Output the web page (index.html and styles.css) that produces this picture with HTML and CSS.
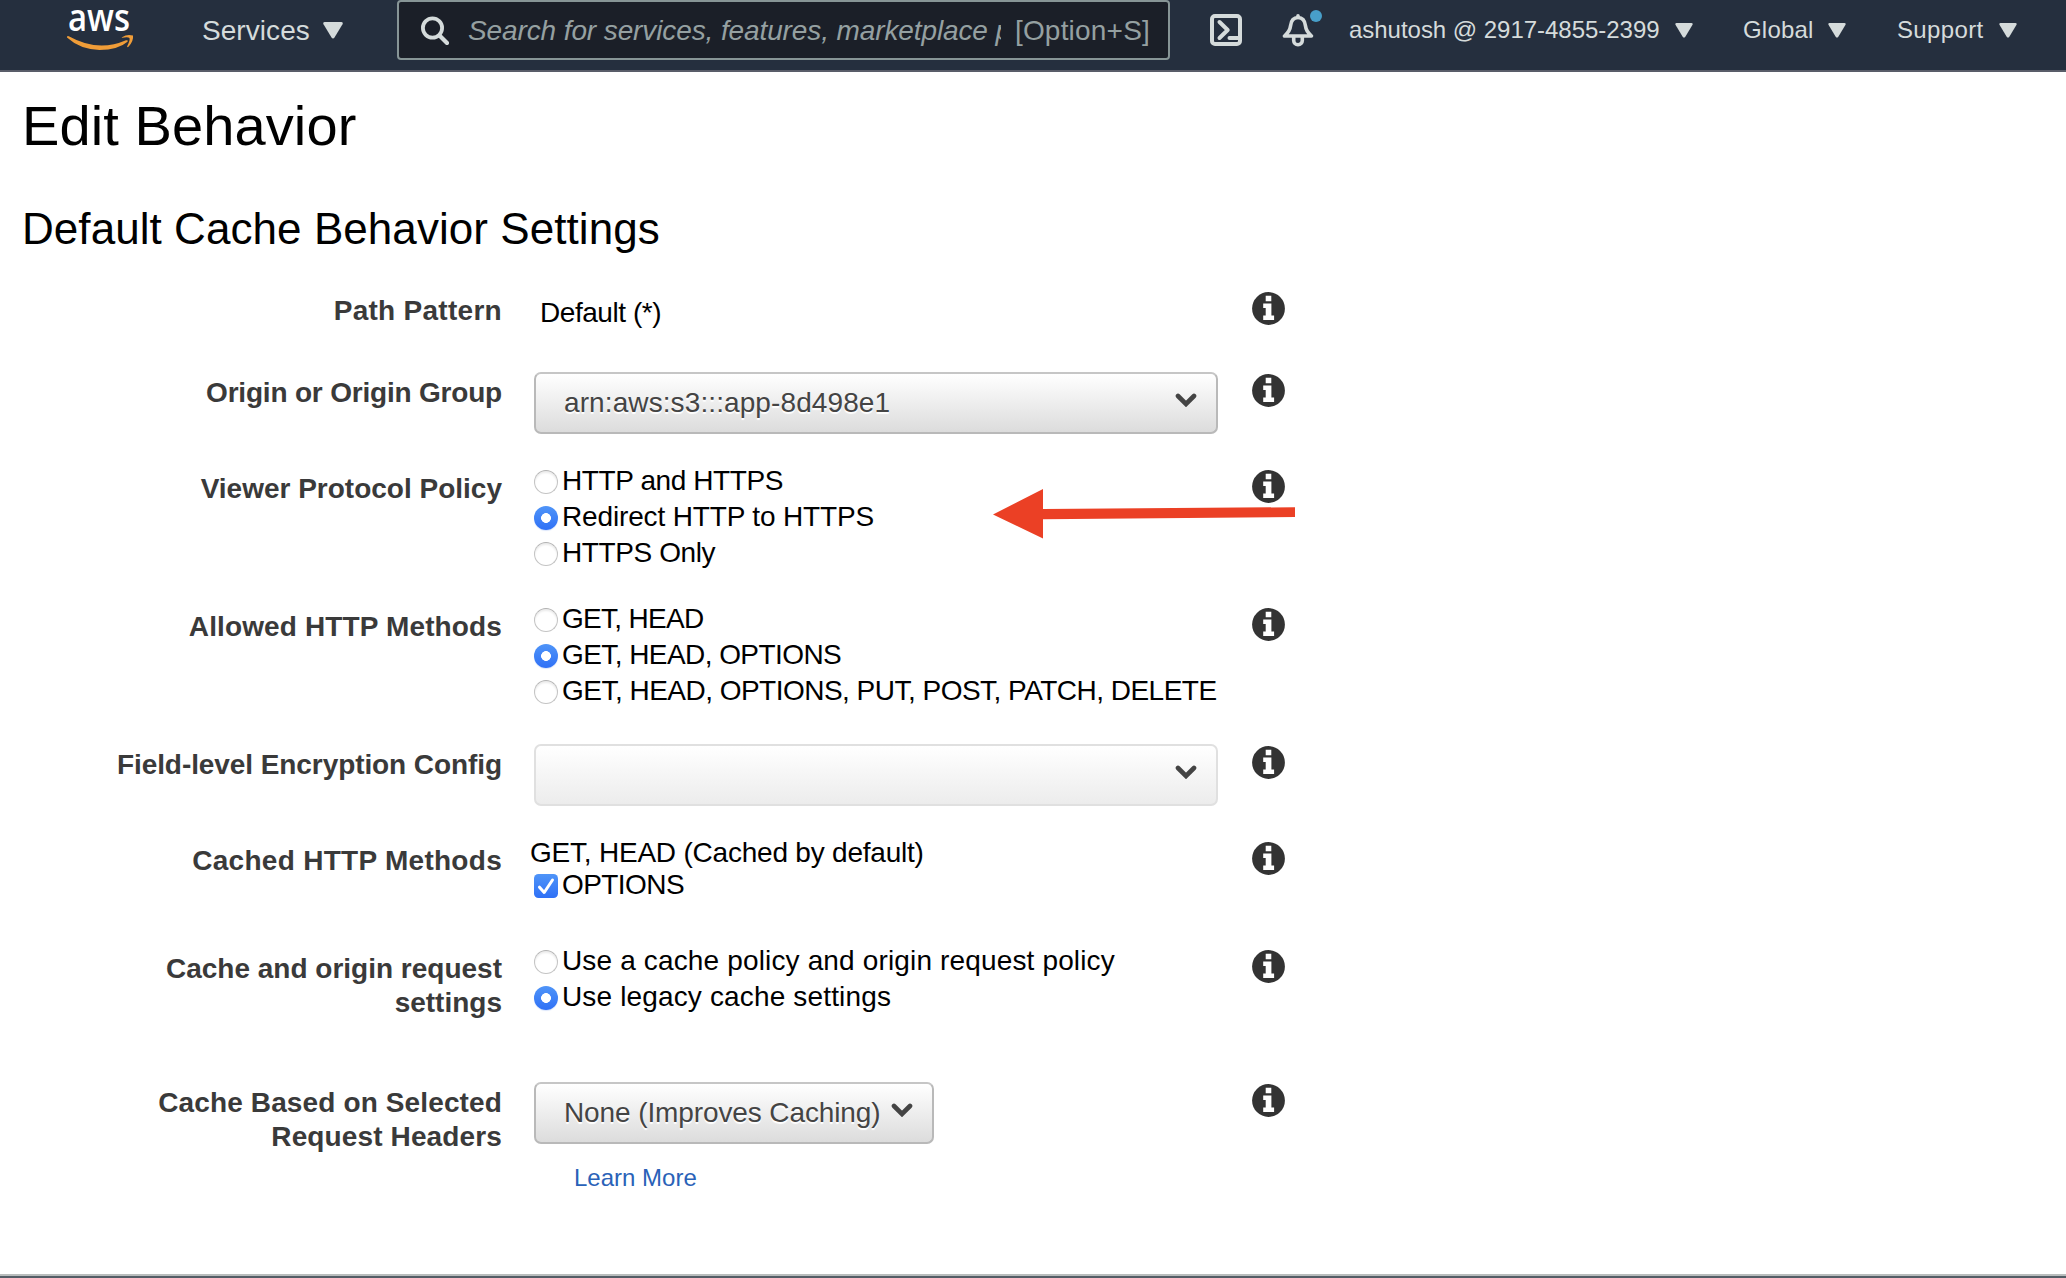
FILE: index.html
```html
<!DOCTYPE html>
<html lang="en">
<head>
<meta charset="utf-8">
<title>Edit Behavior</title>
<link rel="stylesheet" href="styles.css">
</head>
<body>
<svg class="sprite" aria-hidden="true">
  <symbol id="caret" viewBox="0 0 20 17"><path d="M1.500 0H18.500Q20.500 .3 19.500 2.200L11.500 15.500Q10 17.500 8.500 15.500L.5 2.200Q-.5 .3 1.500 0Z" fill="#d5dbdb"/></symbol>
  <symbol id="info" viewBox="0 0 33 33"><circle cx="16.500" cy="16.500" r="16.400" fill="#333"/><path d="M13.700 3.800h5.600v5.400h-5.600zM11.200 11.600h8.200v12h2.700v4.500H11.200v-4.500h2.500v-7.500h-2.500z" fill="#fff"/></symbol>
  <symbol id="chevron" viewBox="0 0 22 14"><path d="M3 3l8 8 8-8" fill="none" stroke="#444" stroke-width="4.600" stroke-linecap="round"/></symbol>
</svg>

<header class="topbar">
  <a class="logo" aria-label="aws">
    <svg width="68" height="52" viewBox="0 0 68 52">
      <text x="2" y="30.500" class="logo-word" textLength="62" lengthAdjust="spacingAndGlyphs">aws</text>
      <path d="M1 36.500q1-1 2.300 0Q32 52.500 60 40.300q2.700-.7 1.500 1.500Q52 50 33.500 50 14 49.500 1 37.600z" fill="#f09d38"/>
      <path d="M56 37.200q5.500-3.600 11-1.600.8 5.500-4.500 11.200-1.700 1.200-1.300-.5 3.300-6.800 2.200-8.300-1.400-1.200-6.900-.2-1.400.2-.5-.6z" fill="#f09d38"/>
    </svg>
  </a>
  <div class="nav-item services"><span>Services</span><svg class="caret caret-lg"><use href="#caret"/></svg></div>
  <div class="search">
    <svg class="search-icon" viewBox="0 0 28 29"><circle cx="11.500" cy="12" r="9.600" fill="none" stroke="#d5dbdb" stroke-width="3.800"/><path d="M18.500 19.500L26 27" stroke="#d5dbdb" stroke-width="4.200" stroke-linecap="round"/></svg>
    <span class="search-hint">Search for services, features, marketplace p</span>
    <span class="search-key">[Option+S]</span>
  </div>
  <svg class="shell-icon" width="32" height="32" viewBox="0 0 32 32" fill="none" stroke="#d5dbdb" stroke-width="4"><rect x="2" y="2" width="28" height="28" rx="3"/><path d="M9.500 8l8.200 8-8.200 8" stroke-linecap="round" stroke-linejoin="round"/><path d="M19.500 24H29" stroke-linecap="round"/></svg>
  <svg class="bell-icon" width="42" height="42" viewBox="0 0 42 42" fill="none" stroke="#d5dbdb" stroke-width="3.600"><path d="M16 11.500v-1.700" stroke-linecap="round"/><path d="M16 11.500c-5 0-7 4-7.500 8.500-.4 4-2.500 7-6 10h27c-3.500-3-5.600-6-6-10-.5-4.500-2.500-8.500-7.500-8.500z" stroke-linejoin="round"/><path d="M11.700 31v3.500a4.300 4.300 0 0 0 8.600 0V31"/><circle cx="34" cy="10" r="6" fill="#489fc9" stroke="none"/></svg>
  <div class="nav-item small account"><span>ashutosh @ 2917-4855-2399</span><svg class="caret"><use href="#caret"/></svg></div>
  <div class="nav-item small region"><span>Global</span><svg class="caret"><use href="#caret"/></svg></div>
  <div class="nav-item small support"><span>Support</span><svg class="caret"><use href="#caret"/></svg></div>
</header>

<main class="page">
  <h1>Edit Behavior</h1>
  <h2>Default Cache Behavior Settings</h2>

  <div class="settings">
    <div class="row row-path">
      <div class="label label-loose">Path Pattern</div>
      <div class="field"><span class="value">Default (*)</span></div>
      <svg class="info"><use href="#info"/></svg>
    </div>
    <div class="row row-origin">
      <div class="label label-tight">Origin or Origin Group</div>
      <div class="field"><div class="select"><span>arn:aws:s3:::app-8d498e1</span><svg class="chevron"><use href="#chevron"/></svg></div></div>
      <svg class="info"><use href="#info"/></svg>
    </div>
    <div class="row row-viewer">
      <div class="label">Viewer Protocol Policy</div>
      <div class="field options">
        <label class="option protocol"><i class="radio"></i>HTTP and HTTPS</label>
        <label class="option redirect"><i class="radio checked"></i>Redirect HTTP to HTTPS</label>
        <label class="option protocol"><i class="radio"></i>HTTPS Only</label>
      </div>
      <svg class="info"><use href="#info"/></svg>
      <svg class="arrow" width="303" height="50" viewBox="0 0 303 50"><path d="M0 25.500L50 0V20L302 18.200V28L50 30.200V49.500Z" fill="#eb4025"/></svg>
    </div>
    <div class="row row-methods">
      <div class="label label-mid">Allowed HTTP Methods</div>
      <div class="field options">
        <label class="option verbs-short"><i class="radio"></i>GET, HEAD</label>
        <label class="option verbs"><i class="radio checked"></i>GET, HEAD, OPTIONS</label>
        <label class="option verbs-all"><i class="radio"></i>GET, HEAD, OPTIONS, PUT, POST, PATCH, DELETE</label>
      </div>
      <svg class="info"><use href="#info"/></svg>
    </div>
    <div class="row row-encryption">
      <div class="label label-snug">Field-level Encryption Config</div>
      <div class="field"><div class="select disabled"><span></span><svg class="chevron"><use href="#chevron"/></svg></div></div>
      <svg class="info"><use href="#info"/></svg>
    </div>
    <div class="row row-cached">
      <div class="label label-loose">Cached HTTP Methods</div>
      <div class="field options">
        <div class="cached-note">GET, HEAD (Cached by default)</div>
        <label class="option option-check verbs"><svg class="checkbox" width="24" height="24" viewBox="0 0 24 24"><defs><linearGradient id="blue" x1="0" y1="0" x2="0" y2="1"><stop offset="0" stop-color="#4f94f8"/><stop offset="1" stop-color="#2f70f6"/></linearGradient></defs><rect width="24" height="24" rx="4.500" fill="url(#blue)"/><path d="M5.500 13.200l4.700 5.300L18.500 6" fill="none" stroke="#fff" stroke-width="3" stroke-linecap="round" stroke-linejoin="round"/></svg>OPTIONS</label>
      </div>
      <svg class="info"><use href="#info"/></svg>
    </div>
    <div class="row row-cache">
      <div class="label">Cache and origin request<br>settings</div>
      <div class="field options">
        <label class="option prose"><i class="radio"></i>Use a cache policy and origin request policy</label>
        <label class="option prose"><i class="radio checked"></i>Use legacy cache settings</label>
      </div>
      <svg class="info"><use href="#info"/></svg>
    </div>
    <div class="row row-headers">
      <div class="label label-mid">Cache Based on Selected<br>Request Headers</div>
      <div class="field"><div class="select select-auto"><span>None (Improves Caching)</span><svg class="chevron"><use href="#chevron"/></svg></div><a class="learn">Learn More</a></div>
      <svg class="info"><use href="#info"/></svg>
    </div>
  </div>
</main>
<footer class="bottom-edge"></footer>
</body>
</html>
```
FILE: styles.css
```css
* { box-sizing: border-box; }

body {
  margin: 0;
  height: 1278px;
  display: flex;
  flex-direction: column;
  overflow: hidden;
  background: #fff;
  color: #000;
  font-family: "Liberation Sans", Arial, sans-serif;
  font-size: 28px;
}

svg { display: block; flex: none; }
.sprite { position: absolute; width: 0; height: 0; }

/* Top navigation */
.topbar {
  flex: none;
  height: 72px;
  display: flex;
  align-items: flex-start;
  padding-left: 66px;
  background: #252f3e;
  border-bottom: 2px solid #595d69;
  color: #d5dbdb;
  white-space: nowrap;
}
.logo { width: 136px; flex: none; }
.logo svg { overflow: visible; }
.logo-word { font-family: "Open Sans", sans-serif; font-size: 37px; font-weight: 600; fill: #fff; }
.nav-item { display: flex; flex: none; justify-content: space-between; align-items: flex-start; line-height: 32px; }
.services { width: 141px; padding-top: 15px; letter-spacing: .06px; }
.caret { width: 18px; height: 15px; }
.caret-lg { width: 20px; height: 17px; margin-top: 7px; }

.search {
  flex: none;
  width: 773px;
  height: 60px;
  margin-left: 54px;
  padding: 13px 18px 0 22px;
  display: flex;
  line-height: 32px;
  background: #1b1f28;
  border: 2px solid #879596;
  border-radius: 4px;
  color: #95a0a1;
}
.search-icon { width: 28px; height: 29px; margin-top: 1px; }
.search-hint { width: 535px; margin-left: 19px; overflow: hidden; font-style: italic; letter-spacing: -.11px; }
.search-key { margin-left: 14px; letter-spacing: .2px; }

.shell-icon { margin: 14px 0 0 40px; }
.bell-icon { margin: 6px 0 0 40px; }
.small { font-size: 24px; line-height: 28px; padding-top: 16px; }
.small .caret { margin-top: 7px; }
.account { width: 344px; margin-left: 25px; letter-spacing: -.03px; }
.region { width: 103px; margin-left: 50px; letter-spacing: .2px; }
.support { width: 120px; margin-left: 51px; letter-spacing: .35px; }

/* Page */
.page { flex: 1; min-height: 0; padding-left: 22px; }
h1, h2 { margin: 0; font-weight: 400; }
h1 { margin-top: 22px; font-size: 56px; line-height: 64px; letter-spacing: .1px; }
h2 { margin-top: 46px; font-size: 44px; line-height: 50px; letter-spacing: .06px; }

.settings { margin-top: 36px; }
.row {
  position: relative;
  display: grid;
  grid-template-columns: 480px 750px 33px;
  align-items: start;
}
.row-path { height: 82px; }
.row-origin { height: 96px; }
.row-viewer { height: 138px; }
.row-methods { height: 138px; }
.row-encryption { height: 96px; }
.row-cached { height: 108px; }
.row-cache { height: 134px; }

.label { padding-top: 4px; line-height: 34px; font-weight: 700; color: #3a3a3a; text-align: right; }
.label-loose { letter-spacing: .28px; }
.label-mid { letter-spacing: .13px; }
.label-snug { letter-spacing: -.08px; }
.label-tight { letter-spacing: -.195px; }
.info { width: 33px; height: 33px; margin-top: 2px; }

.field { padding-left: 32px; white-space: nowrap; }
.value { display: block; padding: 6px 0 0 6px; line-height: 34px; letter-spacing: -.45px; }

.select {
  width: 684px;
  height: 62px;
  display: flex;
  justify-content: space-between;
  padding: 11px 19px 0 28px;
  border: 2px solid #b9b9b9;
  border-top-color: #c6c6c6;
  border-radius: 7px;
  background: linear-gradient(#fff, #dcdcdc);
  color: #444;
  line-height: 36px;
  letter-spacing: .1px;
  text-shadow: 0 2px 1px #fff;
}
.select .chevron { width: 22px; height: 14px; margin-top: 8px; }
.select.disabled { border-color: #e0e0e0; background: linear-gradient(#fff, #ececec); }
.select-auto { width: 400px; letter-spacing: -.11px; }
.learn {
  display: block;
  margin-top: 20px;
  padding-left: 40px;
  font-size: 24px;
  line-height: 28px;
  color: #2a62b8;
}

.options { margin-top: -6px; }
.option { display: flex; height: 36px; line-height: 38px; }
.radio {
  flex: none;
  width: 24px;
  height: 24px;
  margin: 8px 4px 0 0;
  border: 1px solid #c4c4c4;
  border-top-color: #b2b2b2;
  border-radius: 50%;
  background: #fff;
  box-shadow: inset 0 2px 2px #ececec;
}
.radio.checked {
  border: 0;
  background: radial-gradient(circle, #fff 4.600px, transparent 5.200px), linear-gradient(#4f94f8, #2f70f6);
  box-shadow: 0 1px 1px #dbe6fb;
}
.checkbox { margin: 8px 4px 0 0; }
.protocol { letter-spacing: -.4px; }
.redirect { letter-spacing: -.15px; }
.verbs-short { letter-spacing: -.7px; }
.verbs { letter-spacing: -.565px; }
.verbs-all { letter-spacing: -.517px; }
.prose { letter-spacing: .15px; }
.cached-note { height: 32px; margin-left: -4px; line-height: 38px; letter-spacing: -.215px; }

/* Callout drawn over the form */
.arrow { position: absolute; left: 971px; top: 21px; }

.bottom-edge { flex: none; height: 4px; background: #545d66; border-top: 2px solid #b9bdbd; }
```
